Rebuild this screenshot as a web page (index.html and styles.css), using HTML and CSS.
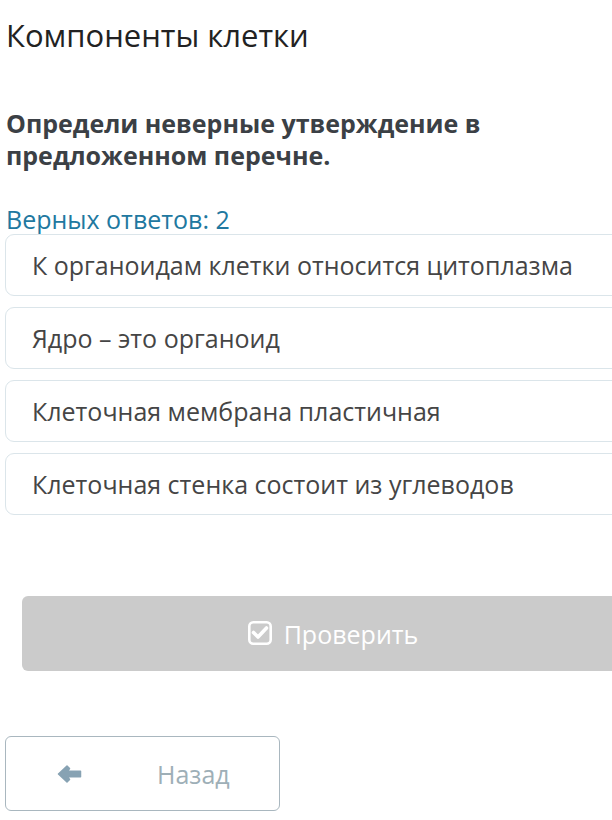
FILE: index.html
```html
<!DOCTYPE html>
<html lang="ru">
<head>
    <meta charset="UTF-8">
    <title>Компоненты клетки</title>
    <link rel="stylesheet" href="styles.css">
</head>
<body>
    <div class="page">
        <h1 class="lesson-title">Компоненты клетки</h1>

        <p class="question">Определи неверные утверждение в предложенном перечне.</p>

        <div class="hint">Верных ответов: 2</div>

        <div class="answers">
            <div class="answer">К органоидам клетки относится цитоплазма</div>
            <div class="answer">Ядро – это органоид</div>
            <div class="answer">Клеточная мембрана пластичная</div>
            <div class="answer">Клеточная стенка состоит из углеводов</div>
        </div>

        <button class="check-btn" type="button" disabled>
            <svg class="check-icon" viewBox="0 0 24 24" width="24" height="24">
                <rect x="1.3" y="1.3" width="21.4" height="21.4" rx="4" fill="none" stroke="currentColor" stroke-width="2.6"/>
                <path d="M5.5 11.5l4.5 4.5 8.5-9" fill="none" stroke="currentColor" stroke-width="3.6" stroke-linecap="round" stroke-linejoin="round"/>
            </svg>
            <span>Проверить</span>
        </button>

        <div class="nav">
            <button class="back-btn" type="button">
                <svg class="back-icon" viewBox="0 0 25 18" width="25" height="18">
                    <path d="M1.5 9L10 1L12.5 3.5L10.5 6.3H23.5V11.7H10.5L12.5 14.5L10 17Z" fill="currentColor" stroke="currentColor" stroke-width="1.5" stroke-linejoin="round"/>
                </svg>
                <span>Назад</span>
            </button>
        </div>
    </div>
</body>
</html>
```

FILE: styles.css
```css
html, body {
    overflow: hidden;
}

body {
    font-family: 'Open Sans', 'Noto Sans', sans-serif;
    background: #fff;
    margin: 0;
}

.page {
    width: 650px;
    padding: 0 0 0 5px;
}

.lesson-title {
    margin: 0;
    padding: 14px 0 0 1px;
    font-size: 31px;
    font-weight: 400;
    line-height: 42px;
    color: #222;
}

.question {
    margin: 51px 0 0;
    padding-left: 1px;
    font-size: 25px;
    font-weight: 700;
    line-height: 32px;
    color: #3b4045;
    width: 520px;
}

.hint {
    margin-top: 33px;
    padding-left: 1px;
    font-size: 25px;
    line-height: 30px;
    color: #2178a0;
}

.answers {
    display: flex;
    flex-direction: column;
    gap: 11px;
}

.answer {
    height: 60px;
    display: flex;
    align-items: center;
    padding-left: 26px;
    border: 1px solid #dbe5ea;
    border-radius: 9px;
    font-size: 25px;
    color: #454545;
}

.check-btn {
    margin: 81px 0 0 17px;
    width: 622px;
    height: 75px;
    display: flex;
    align-items: center;
    justify-content: center;
    gap: 12px;
    background: #cbcbcb;
    border: none;
    border-radius: 6px;
    color: #fff;
    font-family: inherit;
    font-size: 25px;
}

.check-icon {
    margin-top: -1px;
}

.nav {
    margin-top: 65px;
}

.back-btn {
    width: 275px;
    height: 75px;
    display: flex;
    align-items: center;
    padding: 0 0 0 51px;
    background: #fff;
    border: 1px solid #a9b7bf;
    border-radius: 6px;
    font-family: inherit;
    font-size: 25px;
    color: #9eafb7;
}

.back-icon {
    color: #87a2b3;
}

.back-btn span {
    margin-left: 75px;
}
```
